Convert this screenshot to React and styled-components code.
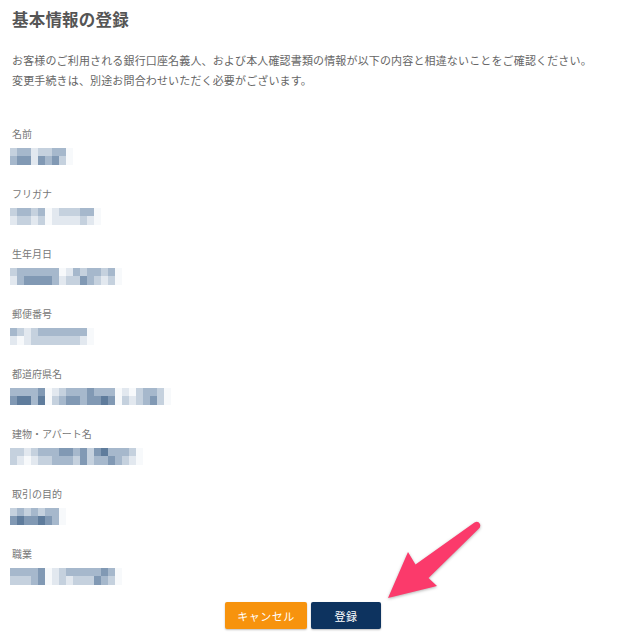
import React from 'react';
import styled, { createGlobalStyle } from 'styled-components';

const GlobalStyle = createGlobalStyle`
  html, body {
    margin: 0;
    padding: 0;
    background: #fff;
  }
  body {
    font-family: "Noto Sans CJK JP", "Noto Sans", sans-serif;
  }
`;

// censored values: each field is two rows of pixel blocks, 0 = paper, 5 = darkest
const fields = [
  { label: '名前', top: '233122330', bottom: '344143420' },
  { label: 'フリガナ', top: '2332301222330', bottom: '1221201111210' },
  { label: '生年月日', top: '2333333013233230', bottom: '1344443122432120' },
  { label: '郵便番号', top: '321233333330', bottom: '101222222210' },
  { label: '都道府県名', top: '33334012333433301023320', bottom: '45535023443445402123420' },
  { label: '建物・アパート名', top: '2212333443424533320', bottom: '2101223332423343210' },
  { label: '取引の目的', top: '23232330', bottom: '45445430' },
  { label: '職業', top: '3333401233333430', bottom: '2223401212224320' },
];

const shades = ['#f7f9fb', '#e2e8ef', '#c5d1de', '#a6b8cc', '#8199b4', '#5f7c9c'];

const Page = styled.div`
  position: relative;
  width: 634px;
  min-height: 643px;
  box-sizing: border-box;
  padding: 7px 12px 0;
`;

const Title = styled.h1`
  margin: 0;
  font-size: 16.5px;
  line-height: 24px;
  font-weight: 700;
  color: #555;
  letter-spacing: 0.2px;
`;

const Lead = styled.p`
  margin: 19px 0 0;
  font-size: 11px;
  line-height: 20px;
  color: #666;
  letter-spacing: 0.15px;
`;

const FieldList = styled.dl`
  margin: 36px 0 0;
  display: flex;
  flex-direction: column;
  gap: 21px;
`;

const Field = styled.div`
  display: flex;
  flex-direction: column;
  gap: 6px;
`;

const Label = styled.dt`
  font-size: 10px;
  line-height: 16px;
  color: #777;
`;

const Value = styled.dd`
  margin: 0 0 0 -2px;
  display: flex;
  flex-direction: column;
  height: 17px;
`;

const BlockRow = styled.div`
  display: flex;
  height: ${(p) => p.$h}px;
`;

const Block = styled.span`
  width: 7px;
  height: 100%;
  background: ${(p) => shades[p.$level]};
`;

const Actions = styled.div`
  display: flex;
  justify-content: center;
  gap: 4px;
  margin-top: 17px;
  padding-right: 28px;
`;

const Button = styled.button`
  height: 27px;
  width: ${(p) => p.$w}px;
  border: none;
  border-radius: 2px;
  background: ${(p) => p.$bg};
  color: #fff;
  font-family: inherit;
  font-size: 11px;
  letter-spacing: 0.5px;
  box-shadow: 0 1px 2px rgba(0, 0, 0, 0.25);
  cursor: pointer;
`;

const Arrow = styled.svg`
  position: absolute;
  left: 0;
  top: 0;
  pointer-events: none;
  filter: drop-shadow(0 1px 1.5px rgba(0, 0, 0, 0.3));
`;

const Mosaic = ({ top, bottom }) => (
  <Value>
    <BlockRow $h={8}>
      {top.split('').map((c, i) => (
        <Block key={i} $level={Number(c)} />
      ))}
    </BlockRow>
    <BlockRow $h={9}>
      {bottom.split('').map((c, i) => (
        <Block key={i} $level={Number(c)} />
      ))}
    </BlockRow>
  </Value>
);

const App = () => (
  <Page>
    <GlobalStyle />
    <Title>基本情報の登録</Title>
    <Lead>
      お客様のご利用される銀行口座名義人、および本人確認書類の情報が以下の内容と相違ないことをご確認ください。
      <br />
      変更手続きは、別途お問合わせいただく必要がございます。
    </Lead>
    <FieldList>
      {fields.map((f) => (
        <Field key={f.label}>
          <Label>{f.label}</Label>
          <Mosaic top={f.top} bottom={f.bottom} />
        </Field>
      ))}
    </FieldList>
    <Actions>
      <Button $w={82} $bg="#f7930d">キャンセル</Button>
      <Button $w={70} $bg="#0d335f">登録</Button>
    </Actions>
    <Arrow width="634" height="643" viewBox="0 0 634 643">
      <path
        d="M388 598 L408 552 L415.5 564.5 L474.5 522.5 Q478 520.5 480 524 Q481 527.5 478.5 529 L428.5 578 L437 586 Z"
        fill="#fb3a6b"
        strokeLinejoin="round"
      />
    </Arrow>
  </Page>
);

export default App;
